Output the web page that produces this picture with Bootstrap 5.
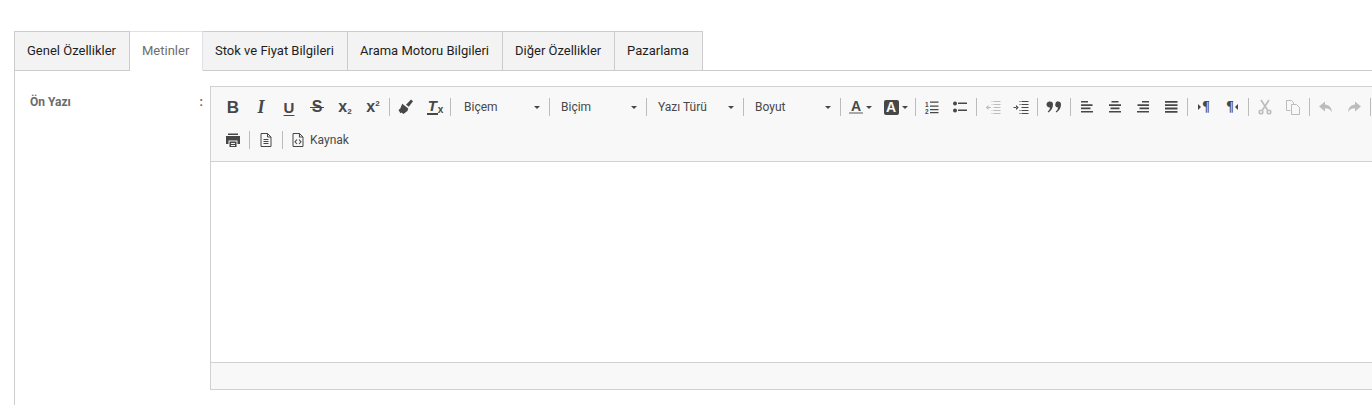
<!DOCTYPE html>
<html lang="tr">
<head>
<meta charset="utf-8">
<title>Metinler</title>
<link href="https://cdn.jsdelivr.net/npm/bootstrap@5.3.0/dist/css/bootstrap.min.css" rel="stylesheet">
<style>
html,body{height:405px;overflow:hidden;background:#fff;font-family:Roboto,sans-serif;font-size:13px}
.pg{padding:31px 0 0 14px;height:405px;display:flex;flex-direction:column;width:1372px}
.tabbar{flex-wrap:nowrap;border-bottom:1px solid #ccc;height:40px;--bs-nav-tabs-border-width:0}
.tabbar .nav-item{margin:0}
.tabbar .nav-link{height:40px;margin:0;padding:0 0 2px 12px;display:flex;align-items:center;background:#f3f3f3;color:#1e1e1e;border:1px solid #ccc;border-left-width:0;border-radius:0;font-size:13px;line-height:1}
.tabbar .nav-item:nth-child(1) .nav-link{border-left-width:1px;width:116px}
.tabbar .nav-item:nth-child(2) .nav-link{width:73px}
.tabbar .nav-item:nth-child(3) .nav-link{width:145px}
.tabbar .nav-item:nth-child(4) .nav-link{width:155px}
.tabbar .nav-item:nth-child(5) .nav-link{width:112px}
.tabbar .nav-item:nth-child(6) .nav-link{width:88px}
.tabbar .nav-link.active{background:#fff;color:#6e6e6e;border-bottom-color:#fff}
.pane{flex:1;border-left:1px solid #ccc;display:flex;padding:15px 0 0 15px;min-height:0}
.lbl{width:180px;flex:none;display:flex;justify-content:space-between;padding:9px 7px 0 0;font-size:12px;font-weight:700;color:#6b6b6b;line-height:14px}
.ed{width:1300px;flex:none;height:304px;border:1px solid #d1d1d1;display:flex;flex-direction:column}
.tb{height:75px;background:#f8f8f8;border-bottom:1px solid #d1d1d1;padding:7px 0 0 8px;flex:none}
.tr{display:flex;align-items:center;height:26px;margin-bottom:7px;color:#474747}
.bt{width:28px;height:26px;flex:none;display:flex;align-items:center;justify-content:center;position:relative}
.bt.off{color:#bcbcbc}
.bt svg{display:block}
.sp{width:1px;height:18px;background:#bcbcbc;margin:0 2px;flex:none}
.cb{width:92px;height:26px;flex:none;display:flex;align-items:center;justify-content:space-between;padding:0 7px 0 9px;font-size:12px;color:#484848}
.cb.wd{width:94px;padding-left:11px}
.car{width:0;height:0;border:3px solid transparent;border-top-color:#474747;border-bottom-width:0;display:block;flex:none}
.cl{width:35px;height:26px;flex:none;display:flex;align-items:center;justify-content:center;gap:3px}
.gx{font-family:"Liberation Sans",sans-serif;font-weight:700;line-height:1;color:#474747}
.g-b{font-size:17px}
.g-i{font-family:"Liberation Serif",serif;font-style:italic;font-size:18px}
.g-u{font-size:15px;text-decoration:underline;text-underline-offset:2px}
.g-s{font-size:16px;position:relative}
.g-s::after{content:"";position:absolute;left:-2px;right:-2px;top:8px;height:1px;background:#474747}
.g-x{font-size:16px;display:flex;align-items:baseline}
.g-x sub,.g-x sup{font-size:8px;font-weight:700;line-height:0;position:static;vertical-align:baseline}
.g-x sup{transform:translateY(-6px)}
.g-x sub{transform:translateY(2px)}
.g-t{font-size:15px;font-style:italic;display:flex;align-items:baseline;margin-left:2px}
.g-t b{border-bottom:2px solid #474747;line-height:14px;display:inline-block;padding:0 1px}
.g-t small{font-style:normal;font-size:10px;transform:translateY(2px);display:inline-block}
.g-p{font-family:"Liberation Serif",serif;font-size:14px;display:flex;align-items:center;gap:1px}
.tri-r{border:3px solid transparent;border-left-color:#474747;border-right-width:0}
.tri-l{border:3px solid transparent;border-right-color:#474747;border-left-width:0}
.colA{width:14px;height:14px;text-align:center;font-size:14px;border-bottom:2px solid #a8a8a8;line-height:12px}
.colB{width:15px;height:15px;background:#474747;color:#f8f8f8;border-radius:2px;text-align:center;font-size:14px;line-height:15px}
.src{width:auto;gap:4px;padding-left:5px;font-size:12px;color:#484848}
.body{flex:1;background:#fff}
.ft{height:27px;background:#f8f8f8;border-top:1px solid #d1d1d1;flex:none}
</style>
</head>
<body>
<div class="pg">
<ul class="nav nav-tabs tabbar">
<li class="nav-item"><a class="nav-link" href="#">Genel Özellikler</a></li>
<li class="nav-item"><a class="nav-link active" href="#">Metinler</a></li>
<li class="nav-item"><a class="nav-link" href="#">Stok ve Fiyat Bilgileri</a></li>
<li class="nav-item"><a class="nav-link" href="#">Arama Motoru Bilgileri</a></li>
<li class="nav-item"><a class="nav-link" href="#">Diğer Özellikler</a></li>
<li class="nav-item"><a class="nav-link" href="#">Pazarlama</a></li>
</ul>
<div class="pane">
<div class="lbl"><span>Ön Yazı</span><span>:</span></div>
<div class="ed">
<div class="tb">
<div class="tr">
<div class="bt"><span class="gx g-b">B</span></div>
<div class="bt"><span class="gx g-i">I</span></div>
<div class="bt"><span class="gx g-u">U</span></div>
<div class="bt"><span class="gx g-s">S</span></div>
<div class="bt"><span class="gx g-x">x<sub>2</sub></span></div>
<div class="bt"><span class="gx g-x">x<sup>2</sup></span></div>
<div class="sp"></div>
<div class="bt"><svg width="16" height="16" viewBox="0 0 16 16" fill="currentColor"><path d="M8 5.800 13 .5 15 2.200 10.800 7.800z"/><path d="M4.200 4.800 10.300 9.500 9.400 12 6.800 14 5.300 15 3.600 13.400 2.400 14.300.5 11 2.300 9.600z"/></svg></div>
<div class="bt"><span class="gx g-t"><b>T</b><small>x</small></span></div>
<div class="sp"></div>
<div class="cb wd"><span>Biçem</span><i class="car"></i></div>
<div class="sp"></div>
<div class="cb"><span>Biçim</span><i class="car"></i></div>
<div class="sp"></div>
<div class="cb"><span>Yazı Türü</span><i class="car"></i></div>
<div class="sp"></div>
<div class="cb"><span>Boyut</span><i class="car"></i></div>
<div class="sp"></div>
<div class="cl"><span class="gx colA">A</span><i class="car"></i></div>
<div class="cl"><span class="gx colB">A</span><i class="car"></i></div>
<div class="sp"></div>
<div class="bt"><svg width="16" height="16" viewBox="0 0 16 16" fill="currentColor"><path d="M6 2.500h8.500v1.200H6zM6 6.500h8.500v1.200H6zM6 10h8.500v1.200H6zM6 13h8.500v1.200H6z"/><text x="1" y="7.500" font-family="Liberation Sans" font-size="6.500" font-weight="700">1</text><text x="1" y="14.500" font-family="Liberation Sans" font-size="6.500" font-weight="700">2</text></svg></div>
<div class="bt"><svg width="16" height="16" viewBox="0 0 16 16" fill="currentColor"><circle cx="3" cy="4.500" r="2"/><circle cx="3" cy="11.500" r="2"/><path d="M6 3.500h9v1.500H6zM6 10.500h9V12H6z"/></svg></div>
<div class="sp"></div>
<div class="bt off"><svg width="16" height="16" viewBox="0 0 16 16" fill="currentColor"><path d="M8.500 2h7v1h-7zM8.500 5h7v1h-7zM8.500 8h7v1h-7zM8.500 11h7v1h-7zM8.500 14h7v1h-7zM6.500 2h1v1h-1zM6.500 5h1v1h-1zM6.500 11h1v1h-1zM6.500 14h1v1h-1z"/><path d="M2 8h4v1H2zM3.500 6v5L.8 8.500z"/></svg></div>
<div class="bt"><svg width="16" height="16" viewBox="0 0 16 16" fill="currentColor"><path d="M8.500 2h7v1h-7zM8.500 5h7v1h-7zM8.500 8h7v1h-7zM8.500 11h7v1h-7zM8.500 14h7v1h-7zM6.500 2h1v1h-1zM6.500 5h1v1h-1zM6.500 11h1v1h-1zM6.500 14h1v1h-1z"/><path d="M.5 8h3v1h-3zM3 6v5l2.700-2.500z"/></svg></div>
<div class="sp"></div>
<div class="bt"><svg width="16" height="16" viewBox="0 0 16 16" fill="currentColor"><path fill-rule="evenodd" d="M4 2.500a3 3 0 0 1 3 3c0 3.500-2 6.500-4.600 8l-.7-.9c1.300-1.100 2.100-2.300 2.400-4.200A3 3 0 1 1 4 2.500zM12 2.500a3 3 0 0 1 3 3c0 3.500-2 6.500-4.600 8l-.7-.9c1.300-1.100 2.100-2.300 2.400-4.200a3 3 0 1 1 .9-5.900z"/></svg></div>
<div class="sp"></div>
<div class="bt"><svg width="16" height="16" viewBox="0 0 16 16" fill="currentColor"><path d="M2 2h7v1.600H2zM2 5.300h11.500v1.600H2zM2 8.600h9.500v1.600H2zM2 12h12v1.600H2z"/></svg></div>
<div class="bt"><svg width="16" height="16" viewBox="0 0 16 16" fill="currentColor"><path d="M4.500 2h7v1.600h-7zM2 5.300h12v1.600H2zM3.500 8.600h9v1.600h-9zM2 12h12v1.600H2z"/></svg></div>
<div class="bt"><svg width="16" height="16" viewBox="0 0 16 16" fill="currentColor"><path d="M7 2h7v1.600H7zM2.500 5.300H14v1.600H2.500zM4.500 8.600H14v1.600H4.500zM2 12h12v1.600H2z"/></svg></div>
<div class="bt"><svg width="16" height="16" viewBox="0 0 16 16" fill="currentColor"><path d="M2 2h12.500v1.800H2zM2 5.300h12.500v1.800H2zM2 8.600h12.500v1.800H2zM2 12h12.500v1.800H2z"/></svg></div>
<div class="sp"></div>
<div class="bt"><span class="gx g-p"><i class="tri-r"></i>¶</span></div>
<div class="bt"><span class="gx g-p">¶<i class="tri-l"></i></span></div>
<div class="sp"></div>
<div class="bt off"><svg width="16" height="16" viewBox="0 0 16 16" fill="none" stroke="currentColor" stroke-width="1.600"><path d="M4 1l6.500 10M12 1L5.500 11"/><circle cx="4" cy="13" r="1.800"/><circle cx="12" cy="13" r="1.800"/></svg></div>
<div class="bt off"><svg width="16" height="16" viewBox="0 0 16 16" fill="none" stroke="currentColor"><path d="M5.500 11.500h-4v-10h5l2 2v2"/><path d="M6.500 5.500h5l3 3v7h-8z"/></svg></div>
<div class="sp"></div>
<div class="bt off"><svg width="16" height="16" viewBox="0 0 16 16" fill="currentColor"><path d="M7 2.500 1 7.500l6 5V9.300c3 0 5 .8 7 3.700-.5-4.500-3-7-7-7.400z"/></svg></div>
<div class="bt off"><svg width="16" height="16" viewBox="0 0 16 16" fill="currentColor"><path d="M9 2.500l6 5-6 5V9.300c-3 0-5 .8-7 3.700.5-4.500 3-7 7-7.400z"/></svg></div>
<div class="sp"></div>
</div>
<div class="tr">
<div class="bt"><svg width="16" height="16" viewBox="0 0 16 16" fill="currentColor"><path d="M3 1.500h10V3H3z"/><path fill-rule="evenodd" d="M1 4h14v8h-2.500V8.500h-9V12H1z"/><path fill-rule="evenodd" d="M4.500 9.500h7v5.500h-7zM6 11v.9h4V11zm0 2v.9h4V13z"/></svg></div>
<div class="sp"></div>
<div class="bt"><svg width="16" height="16" viewBox="0 0 16 16" fill="none" stroke="currentColor"><path d="M3 1.500h6.500l3.500 3.500v9.500H3z"/><path d="M9.500 1.500V5H13M5.500 7.500h5M5.500 9.500h5M5.500 11.500h5"/></svg></div>
<div class="sp"></div>
<div class="bt src"><svg width="16" height="16" viewBox="0 0 16 16" fill="none" stroke="currentColor"><path d="M3 1.500h6.500l3.500 3.500v9.500H3z"/><path d="M9.500 1.500V5H13M7 7.500 5 9.800 7 12M9 7.500l2 2.300L9 12" stroke-width="1.100"/></svg><span>Kaynak</span></div>
</div>
</div>
<div class="body"></div>
<div class="ft"></div>
</div>
</div>
</div>
<script src="https://cdn.jsdelivr.net/npm/bootstrap@5.3.0/dist/js/bootstrap.bundle.min.js"></script>
</body>
</html>
